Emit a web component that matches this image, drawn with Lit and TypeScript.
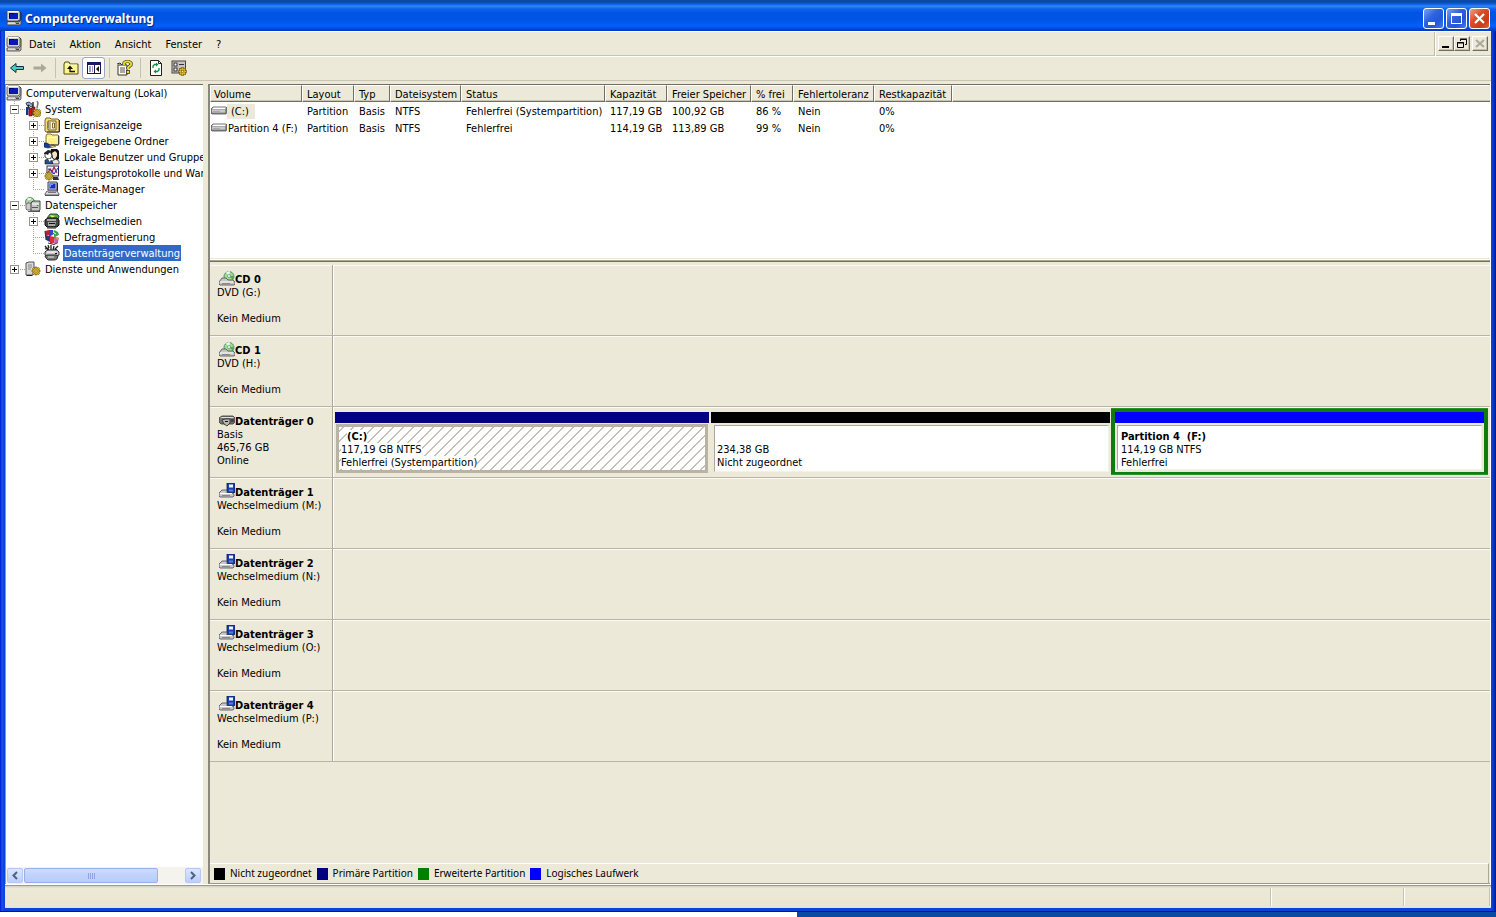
import { LitElement, html, svg, css, nothing } from "lit";
import { customElement, state } from "lit/decorators.js";
import { classMap } from "lit/directives/class-map.js";

const icon = (body: unknown) => html`<svg class="icon" viewBox="0 0 16 16" width="16" height="16" aria-hidden="true">${body}</svg>`;

const gear = (x: number, y: number) => svg`<g transform="translate(${x} ${y})">
  <path d="M3 0h2v1.500l1.500-1 1 1-1 1.500H8v2H6.500l1 1.500-1 1-1.500-1V8H3V6.500l-1.500 1-1-1 1-1.500H0V3h1.500l-1-1.500 1-1 1.500 1z" fill="#e0b828" stroke="#5a4600" stroke-width=".6"/>
  <rect x="3" y="3" width="2" height="2" fill="#fff8c0" stroke="#5a4600" stroke-width=".5"/></g>`;

const icons: Record<string, unknown> = {
  computer: svg`<path d="M2 1h11l1 1v8h-1l-1 1H2l-1-1V2z" fill="#d6d3ce" stroke="#40404c" stroke-width=".8"/>
    <path d="M1.500 1.500h11" stroke="#fff" stroke-width="1"/>
    <rect x="3" y="3" width="9" height="6" fill="#0a18b4"/><path d="M3 3h5v1H4v4H3z" fill="#000060"/>
    <path d="M1 12h12l2-2v4l-1 1H1z" fill="#bdbab4" stroke="#40404c" stroke-width=".8"/>
    <path d="M2 13h7" stroke="#fff"/><path d="M10 13.500h3" stroke="#444"/><path d="M14 2l1 1v7" fill="none" stroke="#222" stroke-width=".9"/>`,
  tools: svg`<path d="M1 2l3-1 3 2 1 2-2 1-2-2-2 .500z" fill="#9ad" stroke="#223" stroke-width=".8"/>
    <path d="M3 4l3 9" stroke="#222" stroke-width="1.500"/><path d="M8 1v6" stroke="#333" stroke-width="1.500"/><path d="M12 0l1 2-1 5" stroke="#777" stroke-width="1.500" fill="none"/>
    <rect x="1" y="6" width="2.500" height="8" fill="#18338c"/><rect x="4" y="7" width="3" height="8" fill="#c21820" stroke="#500" stroke-width=".5"/>
    <rect x="7.500" y="6" width="2.500" height="8" fill="#c21820" stroke="#500" stroke-width=".5"/>${gear(8, 8)}`,
  events: svg`<path d="M1 3l1-2h4l1 1h7l1 1v11l-1 1H2l-1-1z" fill="#f6dc7a" stroke="#78602a"/>
    <path d="M4 4h8v9H4z" fill="#fff8dc" stroke="#6b5522"/><path d="M6 5v7M8.500 6h2v5h-2z" stroke="#7c6830" fill="none"/>
    <path d="M3.500 6h1M3.500 8h1M3.500 10h1" stroke="#333"/><path d="M15.500 3v12H3" stroke="#333" fill="none"/>`,
  shared: svg`<path d="M2 3l1-2h4l1 1h6l1 1v8l-1 1H3l-1-1z" fill="#ffee8c" stroke="#8a7432"/>
    <path d="M3 4h10v1H4v5H3z" fill="#fffbd8"/><path d="M14.500 3v9H7" stroke="#444" fill="none"/>
    <path d="M0 10h3l3 2 4 0 1 1-3 1-4 1-4-1z" fill="#183c9c" stroke="#0a1848" stroke-width=".6"/><path d="M5 12.500l5 0 2 1-4 1z" fill="#f0c89c" stroke="#553" stroke-width=".5"/>`,
  users: svg`<path d="M7 0h6l2 2v8l-3 2-3-2-3-4z" fill="#111"/><path d="M8 4l3-2 2 2v3l-2 3-2-1z" fill="#f6e2cc"/>
    <path d="M1 5l3-2 3 1 1 3-2 3H4L1 8z" fill="#fff" stroke="#222" stroke-width=".8"/><path d="M0 4l4-3 4 1-3 2-1 2-2-1H0z" fill="#222"/>
    <path d="M1 11l4-1 3 2 1 3H1z" fill="#285080" stroke="#111" stroke-width=".6"/><path d="M8 12l4-2 3 2v3H9z" fill="#e8e8e8" stroke="#111" stroke-width=".7"/>
    <path d="M4 10l2 3 1-3z" fill="#fff"/>`,
  perf: svg`<rect x="3" y="1" width="11.500" height="10" fill="#fff" stroke="#28285c"/><path d="M4 4h9M4 7h9M7 2v8M10 2v8" stroke="#b8c0e0" stroke-width=".7"/>
    <path d="M4 8l2-4 2 3 2-5 3 6" stroke="#b02040" stroke-width="1.200" fill="none"/><path d="M4 4l3 1 3 4 4-6" stroke="#2030b0" fill="none"/>
    <path d="M9 12l5 0 1 3H9z" fill="#333"/>${gear(1, 7)}`,
  device: svg`<path d="M4 1h9v8H4z" fill="#d0d0dc" stroke="#404054"/><rect x="5.500" y="2.500" width="6" height="5" fill="#1430c8"/><path d="M6 3h3v1H7v2H6z" fill="#7898ff"/>
    <path d="M13.500 2v8" stroke="#223"/><path d="M3 10h10l2 3v1H1v-1z" fill="#dadae0" stroke="#404054" stroke-width=".8"/><path d="M1 14.500h14" stroke="#555"/><path d="M4 11.500h8" stroke="#777"/>`,
  storage: svg`<circle cx="5" cy="5" r="4.500" fill="#a8dca0" stroke="#4c6c4c" stroke-width=".8"/><path d="M5 5L2 1.500 6 .8z" fill="#f0fff0"/><circle cx="5" cy="5" r="1.300" fill="#fff" stroke="#555" stroke-width=".5"/>
    <path d="M1 7l2-1h4v7H2l-1-1z" fill="#ccc" stroke="#555" stroke-width=".8"/><path d="M6 6l2-2h7v9l-1 1H6z" fill="#c4c4c4" stroke="#333" stroke-width=".9"/>
    <path d="M7 7h7" stroke="#fff"/><path d="M7 10.500h6" stroke="#555"/><rect x="12" y="8" width="1.500" height="1" fill="#0a0"/><path d="M3 14.500h12" stroke="#555"/>`,
  removable: svg`<path d="M3 5l3-4 7 0 2 2-1 4H4z" fill="#55aa50" stroke="#222" stroke-width=".8"/><path d="M6 2l5 1-3 2z" fill="#e8f060"/>
    <path d="M1 7l3-2h9l2 2v5l-2 2H3l-2-2z" fill="#454545" stroke="#111"/><path d="M3 7h9" stroke="#e0e0e0" stroke-width="1.300"/><path d="M4 9h8l-1 4H4z" fill="#a8a8a8"/>
    <path d="M5 10.500h6" stroke="#111"/><path d="M3 15h9" stroke="#222"/>`,
  defrag: svg`<path d="M1 2l4-1v5H1z" fill="#c02030"/><path d="M5 1h4l1 4-5 3z" fill="#3048c8"/><path d="M10 1l4 2 1 3-5 2z" fill="#38a048"/>
    <path d="M2 6l4 1v6l-4-2z" fill="#28387c"/><path d="M6 7l5 1-1 6-4 1z" fill="#d83038"/><path d="M11 7l4 2-1 4-4 2z" fill="#c060b0"/>
    <path d="M9 3l3 2" stroke="#fff"/><path d="M4 14l6 1.500 4-2M1 2l1 9" stroke="#333" fill="none"/><path d="M12 8l2 1-1 2z" fill="#f0c830"/>`,
  diskmgmt: svg`<path d="M1 1l3 4M1 4l3-1 1 3M7 0v5M10 1l-1 4M14 1l-3 3 2 1M4 0l1 3" stroke="#222" stroke-width="1.300" fill="none"/>
    <path d="M2 6l2-1h9l2 2v3l-2 1H3l-2-1V7z" fill="#c8c8c8" stroke="#222" stroke-width=".9"/><path d="M3 7h9" stroke="#fff"/>
    <path d="M1 11l2-1h9l2 1-1 3-2 1H4l-2-2z" fill="#777" stroke="#222" stroke-width=".9"/><path d="M4 12h6" stroke="#e8e8e8"/><rect x="11" y="8" width="2" height="1" fill="#111"/>`,
  services: svg`<path d="M1 2l3-1h5v12l-2 1H1z" fill="#d8d8d8" stroke="#555"/><path d="M3 4h4M3 6h4M3 8h3" stroke="#888"/><path d="M1.500 14.500h6" stroke="#222"/>
    ${gear(7, 6)}`,
  volume: svg`<path d="M0 6l2-2h13l1 1v4l-1 2H1l-1-1z" fill="#8b8b8b" stroke="#3c3c3c" stroke-width=".7"/><path d="M1 6l1.500-1.500H15L14 6z" fill="#fff"/><path d="M1 6.500h13V9.500H1z" fill="#c9c9c9"/><path d="M2 8.500h7" stroke="#aaa"/>`,
  cd: svg`<circle cx="10" cy="6.500" r="5" fill="#9fdc8c" stroke="#5f8c78"/><path d="M10 6.500L7 2l4-1z" fill="#e8fff0"/><path d="M10 6.500l5-1-1 4z" fill="#4cae4c"/><circle cx="10" cy="6" r="1.500" fill="#fff" stroke="#477" stroke-width=".6"/>
    <path d="M0 12l3-4h4l2 2h5l2 2v2l-1 1H1l-1-1z" fill="#c4c6c4" stroke="#4a4a4a" stroke-width=".8"/><path d="M1 12h13" stroke="#fff"/><path d="M3 13.500h8" stroke="#888"/>`,
  disk: svg`<path d="M0 6l3-2h11l2 2v4l-2 2H2l-2-2z" fill="#777" stroke="#333" stroke-width=".8"/><path d="M1 6l2-1h11l1 1z" fill="#ddd"/><path d="M3 8l3-1h5v4l-3 3-3-2z" fill="#b8b8a8" stroke="#222" stroke-width=".8"/><path d="M6 9.500h3" stroke="#111"/><path d="M12 7h3v3h-3z" fill="#444"/>`,
  usb: svg`<path d="M8 0h7l1 1v8l-1 1H9L8 9z" fill="#1a3fae" stroke="#0a1a5c" stroke-width=".8"/><rect x="10" y="1.500" width="4" height="3" fill="#eef4ff"/><path d="M10 6.500h4v2h-4z" fill="#5480e0"/>
    <path d="M0 10l3-3h5v3h6l1 2v1l-1 1H1l-1-1z" fill="#c8c8c8" stroke="#484858" stroke-width=".8"/><path d="M1 10.500h12" stroke="#fff"/><path d="M3 12.500h8" stroke="#888"/>`,
  back: svg`<path d="M1.500 8L7 3.500v3h7.500v3H7v3z" fill="#48d0b8" stroke="#0a2c48"/>`,
  forward: svg`<path d="M14.500 8L9 3.500v3H1.500v3H9v3z" fill="#aca899"/>`,
  up: svg`<path d="M1 4l1-2h4l1 2h8v10H1z" fill="#fff68a" stroke="#504818"/><path d="M2 5h12" stroke="#fffde0"/><path d="M7 7v4.500h5" stroke="#111" stroke-width="1.300" fill="none"/><path d="M4 9l3-3.500L10 9z" fill="#111"/>`,
  pane: svg`<rect x="1.500" y="2.500" width="13" height="11" fill="#fff" stroke="#181858"/><path d="M1 4h14" stroke="#181858" stroke-width="2"/><path d="M8.500 4v9" stroke="#181858"/><path d="M3 7h2M3 9h2M3 11h2M6 7h1M6 9h1M6 11h1" stroke="#2838a0"/><path d="M13 6v6l-3-3z" fill="#111"/>`,
  help: svg`<path d="M1 5h9v10H1z" fill="#fffde8" stroke="#333"/><path d="M3 8h5M3 10h5M3 12h5" stroke="#555"/><path d="M0 4l3-1 2 2" stroke="#333" fill="none"/>
    <path d="M7 5V3l2-1.500h3L14 3v2l-3 2.500V9" fill="none" stroke="#333" stroke-width="3.200"/><path d="M7 5V3l2-1.500h3L14 3v2l-3 2.500V9" fill="none" stroke="#f4e020" stroke-width="1.800"/><rect x="9.500" y="10.500" width="3" height="3" fill="#f4e020" stroke="#333" stroke-width=".8"/>`,
  refresh: svg`<path d="M2.500.500h8l3 3v12h-11z" fill="#fff" stroke="#222"/><path d="M10.500.500v3h3" fill="none" stroke="#222"/><path d="M5 8V6l1.500-1.500H9" stroke="#0a8c3a" stroke-width="1.300" fill="none"/><path d="M8 2.500l2.500 2L8 6.500z" fill="#0a8c3a"/><path d="M11 8v2l-1.500 1.500H8" stroke="#0a8c3a" stroke-width="1.300" fill="none"/><path d="M8 9.500l-2.500 2 2.500 2z" fill="#0a8c3a"/>`,
  settings: svg`<rect x="1" y="1" width="13.500" height="12" fill="#c8c5bc" stroke="#444"/><rect x="3" y="3" width="3" height="3" fill="#fff" stroke="#333"/><rect x="3" y="8" width="3" height="3" fill="#fff" stroke="#333"/><path d="M8 4.500h5M8 9h2" stroke="#333"/>${gear(7.5, 7.5)}`,
};

interface Node { id: string; label: string; icon: string; toggle?: boolean; children?: Node[]; selected?: boolean }
const tree: Node[] = [
  { id: "system", label: "System", icon: "tools", children: [
    { id: "ev", label: "Ereignisanzeige", icon: "events", toggle: true },
    { id: "sh", label: "Freigegebene Ordner", icon: "shared", toggle: true },
    { id: "us", label: "Lokale Benutzer und Gruppen", icon: "users", toggle: true },
    { id: "pf", label: "Leistungsprotokolle und Warnungen", icon: "perf", toggle: true },
    { id: "dm", label: "Geräte-Manager", icon: "device" },
  ] },
  { id: "storage", label: "Datenspeicher", icon: "storage", children: [
    { id: "rm", label: "Wechselmedien", icon: "removable", toggle: true },
    { id: "df", label: "Defragmentierung", icon: "defrag" },
    { id: "dk", label: "Datenträgerverwaltung", icon: "diskmgmt", selected: true },
  ] },
  { id: "services", label: "Dienste und Anwendungen", icon: "services", toggle: true },
];

const columns: [string, number][] = [["Volume", 92], ["Layout", 52], ["Typ", 36], ["Dateisystem", 71], ["Status", 144], ["Kapazität", 62],
  ["Freier Speicher", 84], ["% frei", 42], ["Fehlertoleranz", 81], ["Restkapazität", 78]];
const volumes = [
  { name: "(C:)", selected: true, cells: ["Partition", "Basis", "NTFS", "Fehlerfrei (Systempartition)", "117,19 GB", "100,92 GB", "86 %", "Nein", "0%"] },
  { name: "Partition 4 (F:)", selected: false, cells: ["Partition", "Basis", "NTFS", "Fehlerfrei", "114,19 GB", "113,89 GB", "99 %", "Nein", "0%"] },
];

interface Part { kind: string; size: number; name: string; lines: string[] }
interface Disk { name: string; icon: string; lines: string[]; parts?: Part[] }
const disks: Disk[] = [
  { name: "CD 0", icon: "cd", lines: ["DVD (G:)", "", "Kein Medium"] },
  { name: "CD 1", icon: "cd", lines: ["DVD (H:)", "", "Kein Medium"] },
  { name: "Datenträger 0", icon: "disk", lines: ["Basis", "465,76 GB", "Online"], parts: [
    { kind: "primary", size: 375, name: "(C:)", lines: ["117,19 GB NTFS", "Fehlerfrei (Systempartition)"] },
    { kind: "free", size: 400, name: "", lines: ["234,38 GB", "Nicht zugeordnet"] },
    { kind: "logical", size: 370, name: "Partition 4  (F:)", lines: ["114,19 GB NTFS", "Fehlerfrei"] },
  ] },
  ...["M", "N", "O", "P"].map((l, i) => ({ name: `Datenträger ${i + 1}`, icon: "usb", lines: [`Wechselmedium (${l}:)`, "", "Kein Medium"] })),
];

@customElement("app-root")
export class AppRoot extends LitElement {
  @state() private closed = new Set<string>();

  static styles = css`
    :host { display: flex; flex-direction: column; height: 100vh; min-width: 1000px; overflow: hidden; background: #0a4aa0; color: #000;
      font: 11px/13px "DejaVu Sans Condensed", "DejaVu Sans", sans-serif; cursor: default; }
    * { box-sizing: border-box; }
    button { font: inherit; color: inherit; background: none; border: 0; padding: 0; margin: 0; display: flex; align-items: center; justify-content: center; }
    ul { list-style: none; margin: 0; padding: 0; }
    .icon { display: block; flex: none; }

    .window { flex: 1; min-height: 0; display: flex; flex-direction: column; background: linear-gradient(90deg, #0019cf, #1a52ee 2px, #0a44dc 4px, #0a44dc calc(100% - 4px), #0030c8 calc(100% - 2px), #00138c); padding: 0 5px 3px; border-bottom: 1px solid #00138c; }
    .titlebar { flex: none; display: flex; align-items: center; gap: 3px; height: 31px; margin: 0 -5px; padding: 5px 6px 0 6px;
      background: linear-gradient(#0a4ba4 0, #0a4ba4 2px, #0b4fc8 3px, #1c6cf0 5px, #2e8af8 6px, #0a62ea 9px, #0054e3 13px, #0055e5 20px, #0262fb 26px, #0050e0 28px, #0038c0 31px); }
    .titlebar h1 { flex: 1; margin: 0; padding-top: 1px; font: bold 12px/16px "Noto Sans", sans-serif; color: #fff; text-shadow: 1px 1px 1px #0a1f80; }
    .captions { display: flex; gap: 2px; }
    .caption { width: 21px; height: 21px; border: 1px solid #fff; border-radius: 3px; background: linear-gradient(135deg, #7aa0f4, #2f62e0 40%, #2457d8 70%, #3f7cf0); }
    .caption.close { background: linear-gradient(135deg, #f0a088, #dc4c28 40%, #c83c18 75%, #e06a48); }

    .menubar { flex: none; display: flex; align-items: center; height: 25px; padding-left: 1px; background: #ece9d8; border-bottom: 1px solid #c8c4b2; border-top: 1px solid #fff; }
    .menus { flex: 1; display: flex; }
    .menu { padding: 3px 7px 2px; }
    .mdi { display: flex; height: 24px; align-items: center; padding: 0 3px; border-left: 1px solid #c0bca8; box-shadow: inset 1px 0 #fff; }
    .mdi button { width: 16px; height: 15px; background: #ece9d8; border: 1px solid; border-color: #fff #716f64 #716f64 #fff; box-shadow: inset -1px -1px #c5c1ac; }
    .mdi .last { margin-left: 2px; }
    .toolbar { flex: none; display: flex; align-items: center; height: 25px; padding: 0 0 1px; background: #ece9d8; border-top: 1px solid #fff; border-bottom: 1px solid #c8c4b2; }
    .tool { width: 23px; height: 22px; }
    .tool.on { background: #fff; border: 1px solid #98a8c8; border-radius: 3px; }
    .divider { width: 1px; height: 20px; margin: 0 3px 0 4px; background: #c5c2b2; }

    .body { flex: 1; min-height: 0; display: flex; gap: 5px; background: #ece9d8; padding-top: 3px; border-right: 1px solid #fff; }
    .tree { flex: none; width: 198px; display: flex; flex-direction: column; background: #fff; border-top: 1px solid #716f64; border-left: 1px solid #9d9a8c; }
    .nodes { flex: 1; overflow: hidden; }
    .row { display: flex; height: 16px; align-items: center; white-space: nowrap; }
    .nodes .label { padding: 2px 1px 1px; margin-left: 3px; line-height: 13px; }
    .label.selected { background: #316ac5; color: #fff; }
    .guide { flex: none; width: 19px; height: 16px; display: flex; align-items: center; padding-left: 4px;
      --v: repeating-linear-gradient(#a8a594 0 1px, transparent 1px 2px); --h: repeating-linear-gradient(90deg, #a8a594 0 1px, transparent 1px 2px); background-repeat: no-repeat; }
    .guide.pass { background-image: var(--v); background-size: 1px 16px; background-position: 8px 0; }
    .guide.tee { background-image: var(--v), var(--h); background-size: 1px 16px, 11px 1px; background-position: 8px 0, 8px 8px; }
    .guide.end { background-image: var(--v), var(--h); background-size: 1px 9px, 11px 1px; background-position: 8px 0, 8px 8px; }
    .expander { width: 9px; height: 9px; background: #fff; border: 1px solid #98968c; }

    .scroll { flex: none; display: flex; height: 17px; padding: 1px 2px 1px 1px; background: #f4f3ee; }
    .scroll button { width: 16px; height: 15px; border: 1px solid #b4c8f6; border-radius: 2px; background: linear-gradient(#dce6fe, #bccefa); }
    .track { flex: 1; padding: 0 27px 0 1px; display: flex; }
    .thumb { flex: 1; display: flex; align-items: center; justify-content: center; gap: 1px; border: 1px solid #98b0ec; border-radius: 2px; background: linear-gradient(#d0dcfe, #c3d3fd 40%, #b8cbf8); }
    .grip { width: 1px; height: 6px; background: #8ea6e0; }

    .main { flex: 1; min-width: 0; display: flex; flex-direction: column; border: 1px solid #9d9a8c; border-top-color: #716f64; border-right: 0; border-left: 2px solid #8a887c; }
    .volumes { flex: none; height: 173px; background: #fff; overflow: hidden; }
    table { width: 100%; table-layout: fixed; border-collapse: separate; border-spacing: 0; white-space: nowrap; }
    th { height: 17px; padding: 2px 0 0 4px; text-align: left; font-weight: normal; background: #ece9d8; border: 1px solid; border-color: #fff #716f64 #716f64 #fff; box-shadow: inset 0 -1px #c9c5b3; }
    td { height: 17px; padding: 1px 0 0 5px; }
    td:first-child { padding-left: 1px; }
    th:first-child { padding-left: 3px; }
    th:last-child { border-right: 0; }
    .vol { display: flex; align-items: center; height: 16px; }
    .vol .name { padding: 1px 1px; }
    .vol .name.selected { background: #ece9d8; padding: 1px 6px 1px 4px; }
    .split { flex: none; height: 5px; background: linear-gradient(#ece9d8 0 1px, #fff 1px 2px, #aca899 2px 3px, #716f64 3px 4px, #ece9d8 4px); }

    .disks { flex: 1; min-height: 0; overflow: hidden; padding-top: 2px; }
    .disk { display: flex; height: 71px; border-bottom: 1px solid #b8b5a6; box-shadow: inset 0 1px #fbfaf4; }
    .info { flex: none; width: 123px; padding: 8px 0 0 7px; border-right: 1px solid #aca899; white-space: pre; }
    .info .line { height: 13px; }
    .head { display: flex; height: 13px; align-items: center; padding-left: 2px; font-weight: bold; }
    .head .icon { margin-bottom: 3px; }
    .graph { flex: 1; min-width: 0; display: flex; padding: 1px 2px 2px 0; border-left: 1px solid #fff; }
    .part { flex-basis: 0; min-width: 0; display: flex; flex-direction: column; padding: 4px 1px 1px; }
    .bar { flex: none; height: 11px; margin-bottom: 1px; background: #000; }
    .primary .bar { background: #000080; }
    .logical .bar { background: #00f; margin: 0; }
    .box { flex: 1; background: #fff; margin: 1px 1px 2px 3px; border: 1px solid; border-color: #aca899 #f4f2e6 #f4f2e6 #aca899; padding: 4px 0 0 2px; white-space: nowrap; }
    .box div { height: 13px; white-space: pre; }
    .box .title { font-weight: bold; }
    .primary .box { margin: 0 1px 1px; border: 3px solid #b8b3a2; background: linear-gradient(135deg, #fff 0 20%, #c4c1b8 20% 30%, #fff 30% 70%, #c4c1b8 70% 80%, #fff 80%) 0 0 / 10px 10px; padding: 3px 0 0 2px; }
    .primary .box span { background: #fff; }
    .primary .title { padding-left: 6px; }
    .logical { background: #107c10; padding: 3px 4px; border: 1px solid #2c902c; border-width: 1px 0; }
    .inner { flex: 1; display: flex; flex-direction: column; background: #ece9d8; }
    .logical .box { margin: 2px; padding-left: 3px; }

    .legend { flex: none; display: flex; align-items: center; height: 20px; padding-left: 4px; margin-right: 1px; border-top: 1px solid #fff; border-right: 1px solid #aca899; font: 10px/13px "Noto Sans", sans-serif; }
    .legend li { display: flex; align-items: center; gap: 5px; }
    .legend ul { display: flex; gap: 5px; }
    .swatch { width: 11px; height: 12px; background: #000; }
    .swatch.primary { background: #000080; }
    .swatch.extended { background: #008000; }
    .swatch.logical { background: #00f; padding: 0; border: 0; }

    .status { flex: none; display: flex; height: 24px; padding: 4px 1px 2px 0; background: linear-gradient(#fff 0 1px, #9d9a8c 1px 2px, #d8d4c2 2px 3px, #ece9d8 4px, #ebe6d2 22px, #d8e4e8 24px); }
    .status div { border-right: 1px solid #c5c2b2; box-shadow: 1px 0 #fff; }
    .status .grow { flex: 1; }
    .status .pane { width: 133px; }
    .status .small { width: 86px; }
    .desktop { flex: none; height: 5px; background: linear-gradient(90deg, #fff 0 53.3%, #0a4aa0 53.3%); }
  `;

  private toggle(id: string) {
    const next = new Set(this.closed);
    next.has(id) ? next.delete(id) : next.add(id);
    this.closed = next;
  }

  private expander(n: Node) {
    if (!n.children && !n.toggle) return nothing;
    const open = !!n.children && !this.closed.has(n.id);
    return html`<button class="expander" aria-label=${n.label} aria-expanded=${open} @click=${() => n.children && this.toggle(n.id)}>
      <svg viewBox="0 0 7 7" width="7" height="7"><path d=${open ? "M1 3h5v1H1z" : "M1 3h5v1H1zM3 1h1v5H3z"} fill="#000"/></svg></button>`;
  }

  private node(n: Node, last: boolean, outer?: "pass" | ""): unknown {
    return html`<li><div class="row">
        ${outer !== undefined ? html`<span class="guide ${outer}"></span>` : nothing}
        <span class="guide ${last ? "end" : "tee"}">${this.expander(n)}</span>
        ${icon(icons[n.icon])}<span class=${classMap({ label: true, selected: !!n.selected })}>${n.label}</span></div>
      ${n.children && !this.closed.has(n.id) ? html`<ul>${n.children.map((c, i) => this.node(c, i === n.children!.length - 1, last ? "" : "pass"))}</ul>` : nothing}
    </li>`;
  }

  private part(p: Part) {
    const content = html`<div class="bar"></div><div class="box">
      <div class="title"><span>${p.name}</span></div>${p.lines.map((l) => html`<div><span>${l}</span></div>`)}</div>`;
    return html`<div class="part ${p.kind}" style="flex-grow:${p.size}">${p.kind === "logical" ? html`<div class="inner">${content}</div>` : content}</div>`;
  }

  render() {
    return html`
      <div class="window">
        <header class="titlebar">${icon(icons.computer)}<h1>Computerverwaltung</h1>
          <div class="captions">
            <button class="caption" aria-label="Minimieren"><svg width="19" height="19"><path d="M4 13h7v3H4z" fill="#fff"/></svg></button>
            <button class="caption" aria-label="Maximieren"><svg width="19" height="19"><path d="M4 4h11v11H4zM5 7v7h9V7z" fill="#fff" fill-rule="evenodd"/></svg></button>
            <button class="caption close" aria-label="Schließen"><svg width="19" height="19"><path d="M5 5l9 9M14 5l-9 9" stroke="#fff" stroke-width="2.2"/></svg></button>
          </div>
        </header>
        <nav class="menubar">${icon(icons.computer)}
          <div class="menus">${["Datei", "Aktion", "Ansicht", "Fenster", "?"].map((m) => html`<button class="menu">${m}</button>`)}</div>
          <div class="mdi">
            <button aria-label="Fenster minimieren"><svg width="14" height="13"><path d="M3 9h7v2H3z"/></svg></button>
            <button aria-label="Fenster wiederherstellen"><svg width="14" height="13" fill="none" stroke="#000"><path d="M5.500 4V2.500h6v5H10M5 2h7"/><path d="M2.500 5.500h6v5h-6zM2 6h7"/></svg></button>
            <button class="last" aria-label="Fenster schließen"><svg width="14" height="13"><path d="M3 3l8 7M11 3l-8 7" stroke="#aca899" stroke-width="2"/></svg></button>
          </div>
        </nav>
        <div class="toolbar">
          <button class="tool" aria-label="Zurück">${icon(icons.back)}</button>
          <button class="tool" aria-label="Vorwärts">${icon(icons.forward)}</button>
          <span class="divider"></span>
          <button class="tool" aria-label="Aufwärts">${icon(icons.up)}</button>
          <button class="tool on" aria-label="Konsolenstruktur">${icon(icons.pane)}</button>
          <span class="divider"></span>
          <button class="tool" aria-label="Hilfe">${icon(icons.help)}</button>
          <span class="divider"></span>
          <button class="tool" aria-label="Aktualisieren">${icon(icons.refresh)}</button>
          <button class="tool" aria-label="Einstellungen">${icon(icons.settings)}</button>
        </div>
        <div class="body">
          <aside class="tree">
            <div class="nodes">
              <div class="row">${icon(icons.computer)}<span class="label">Computerverwaltung (Lokal)</span></div>
              <ul>${tree.map((n, i) => this.node(n, i === tree.length - 1))}</ul>
            </div>
            <div class="scroll">
              <button aria-label="Nach links"><svg width="8" height="9"><path d="M6 1L2.500 4.500 6 8" fill="none" stroke="#4d6185" stroke-width="2"/></svg></button>
              <div class="track"><div class="thumb"><i class="grip"></i><i class="grip"></i><i class="grip"></i><i class="grip"></i></div></div>
              <button aria-label="Nach rechts"><svg width="8" height="9"><path d="M2 1l3.500 3.500L2 8" fill="none" stroke="#4d6185" stroke-width="2"/></svg></button>
            </div>
          </aside>
          <main class="main">
            <div class="volumes">
              <table>
                <colgroup>${columns.map(([, w]) => html`<col style="width:${w}px">`)}<col></colgroup>
                <thead><tr>${columns.map(([c]) => html`<th>${c}</th>`)}<th></th></tr></thead>
                <tbody>${volumes.map((v) => html`<tr>
                  <td><div class="vol">${icon(icons.volume)}<span class=${classMap({ name: true, selected: v.selected })}>${v.name}</span></div></td>
                  ${v.cells.map((c) => html`<td>${c}</td>`)}<td></td></tr>`)}</tbody>
              </table>
            </div>
            <div class="split"></div>
            <div class="disks">
              ${disks.map((d) => html`<section class="disk">
                <div class="info"><div class="head">${icon(icons[d.icon])}${d.name}</div>${d.lines.map((l) => html`<div class="line">${l}</div>`)}</div>
                <div class="graph">${d.parts?.map((p) => this.part(p))}</div>
              </section>`)}
            </div>
            <div class="legend"><ul>
              <li><i class="swatch"></i>Nicht zugeordnet</li>
              <li><i class="swatch primary"></i>Primäre Partition</li>
              <li><i class="swatch extended"></i>Erweiterte Partition</li>
              <li><i class="swatch logical"></i>Logisches Laufwerk</li>
            </ul></div>
          </main>
        </div>
        <footer class="status"><div class="grow"></div><div class="pane"></div><div class="small"></div></footer>
      </div>
      <div class="desktop"></div>
    `;
  }
}
